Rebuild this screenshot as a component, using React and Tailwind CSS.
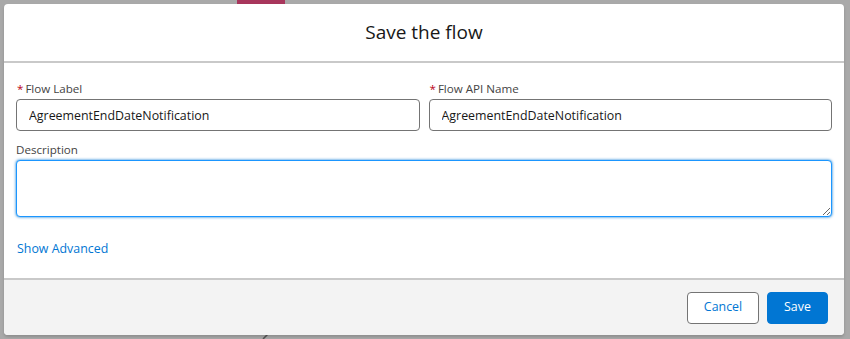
import React from "react";

const font = { fontFamily: '"Open Sans", "Noto Sans", Arial, sans-serif' };

const Field = ({ label, required, value }) => (
  <div className="flex flex-col">
    <label className="h-[19px] pl-[1px] text-[11.6px] leading-[18px] text-[#444444]">
      {required && <span className="mr-[2px] text-[#ba0517]">*</span>}
      {label}
    </label>
    <input
      readOnly
      value={value}
      className="h-[32px] w-full rounded-[4px] border border-[#747474] bg-white px-[12px] text-[12.4px] text-[#181818] outline-none"
    />
  </div>
);

export default function App() {
  return (
    <div
      className="relative h-[339px] w-[850px] overflow-hidden bg-[#a9a9a9] pl-[4px] pt-[4px]"
      style={font}
    >
      {/* bits of the page behind the backdrop */}
      <div className="absolute left-[237px] top-0 h-[4px] w-[48px] bg-[#a8365c]" />
      <svg className="absolute left-[262px] top-[334px]" width="8" height="5">
        <path d="M1 5 L6 0" stroke="#555" strokeWidth="1.5" />
      </svg>

      <div className="relative flex h-[331px] w-[840px] flex-col overflow-hidden rounded-[4px] bg-white shadow-[0_2px_3px_rgba(0,0,0,0.16)]">
        <div className="flex h-[59px] shrink-0 items-center justify-center border-b-2 border-[#c9c9c9]">
          <h2 className="text-[19px] leading-[25px] text-[#181818]">Save the flow</h2>
        </div>

        <div className="flex flex-col px-[12px] pt-[17px]">
          <div className="grid grid-cols-2 gap-[9px]">
            <Field label="Flow Label" required value="AgreementEndDateNotification" />
            <Field label="Flow API Name" required value="AgreementEndDateNotification" />
          </div>

          <div className="mt-[10px] flex flex-col">
            <label className="h-[19px] text-[11.6px] leading-[18px] text-[#444444]">
              Description
            </label>
            <textarea className="h-[57px] w-full rounded-[4px] border border-[#1b96ff] bg-white px-[12px] text-[12.4px] text-[#181818] shadow-[0_0_3px_#0176d3] outline-none" />
          </div>

          <div className="mt-[22px] h-[20px] pl-[1px] text-[12.4px] leading-[20px] text-[#0176d3]">
            Show Advanced
          </div>
        </div>

        <div className="mt-auto flex h-[57px] shrink-0 items-center justify-end gap-[8px] border-t-2 border-[#c9c9c9] bg-[#f3f3f3] pr-[16px]">
          <button className="h-[32px] w-[72px] rounded-[4px] border border-[#747474] bg-white text-[12.4px] text-[#0176d3]">
            Cancel
          </button>
          <button className="h-[32px] w-[61px] rounded-[4px] border border-[#0176d3] bg-[#0176d3] text-[12.4px] text-white">
            Save
          </button>
        </div>
      </div>
    </div>
  );
}
